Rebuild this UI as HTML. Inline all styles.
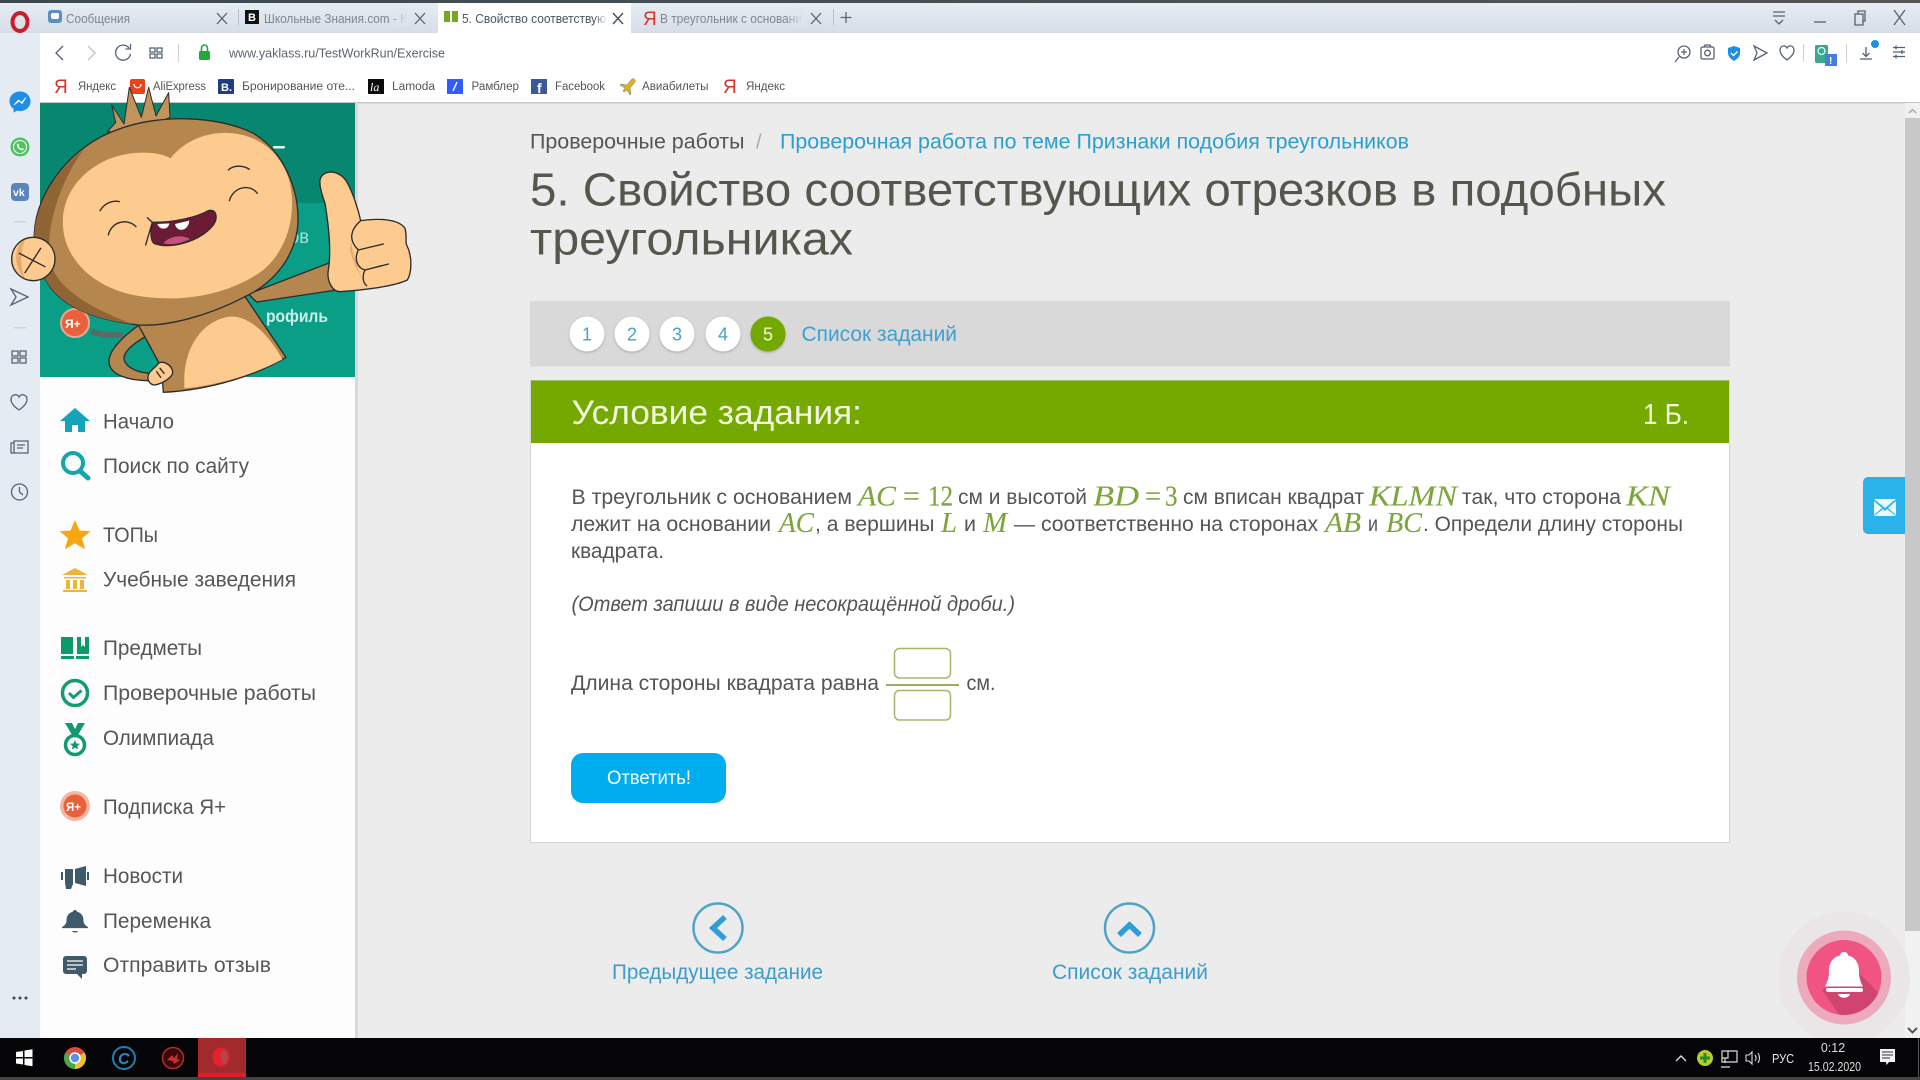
<!DOCTYPE html>
<html lang="ru"><head><meta charset="utf-8"><title>5. Свойство соответствующих отрезков</title>
<style>
html,body{margin:0;padding:0;width:1920px;height:1080px;overflow:hidden;background:#ececec}
svg{display:block}
text{font-family:"Liberation Sans","DejaVu Sans",sans-serif;white-space:pre}
.m{font-family:"Liberation Serif","DejaVu Serif",serif;font-style:italic;fill:#7ca53c;stroke:#7ca53c;stroke-width:.12;font-size:28px}
.mr{font-family:"Liberation Serif","DejaVu Serif",serif;fill:#7ca53c;stroke:#7ca53c;stroke-width:.2;font-size:28px}
.b{fill:#555;font-size:21px}
.nav{fill:#565656;font-size:21.5px}
.tab{fill:#7b8794;font-size:12.5px}
.bm{fill:#555;font-size:11.5px}
.ic{fill:none;stroke:#566273;stroke-width:1.3}
.ol{stroke:#2b2b2b;stroke-width:4;stroke-linejoin:round;stroke-linecap:round}
</style></head><body>
<svg width="1920" height="1080" viewBox="0 0 1920 1080" xmlns="http://www.w3.org/2000/svg">
<defs>
<linearGradient id="tb" x1="0" y1="0" x2="0" y2="1"><stop offset="0" stop-color="#e8eef5"/><stop offset="1" stop-color="#d6dde6"/></linearGradient>
<linearGradient id="top" x1="0" y1="0" x2="1" y2="0"><stop offset="0" stop-color="#3c4a50"/><stop offset="1" stop-color="#555"/></linearGradient>
<linearGradient id="fade" x1="0" y1="0" x2="1" y2="0"><stop offset="0" stop-color="#dee5ed" stop-opacity="0"/><stop offset="1" stop-color="#dee5ed"/></linearGradient>
<linearGradient id="fadew" x1="0" y1="0" x2="1" y2="0"><stop offset="0" stop-color="#fff" stop-opacity="0"/><stop offset="1" stop-color="#fff"/></linearGradient>
<filter id="sh" x="-30%" y="-30%" width="160%" height="160%"><feDropShadow dx="0" dy="1" stdDeviation="1.2" flood-color="#000" flood-opacity=".25"/></filter>
<clipPath id="bellc"><circle cx="1844" cy="977.5" r="37.5"/></clipPath>
</defs>

<!-- page bg -->
<rect width="1920" height="1080" fill="#ececec"/>

<!-- browser chrome -->
<rect width="1920" height="33" fill="url(#tb)"/>
<rect width="1920" height="3" fill="url(#top)"/>
<rect x="40" y="33" width="1880" height="70" fill="#fff"/>
<rect x="40" y="102" width="1880" height="1.5" fill="#c9c9c9"/>
<rect x="0" y="33" width="40" height="1005" fill="#e4ebf3"/>

<!-- Opera logo -->
<ellipse cx="20" cy="22" rx="7.5" ry="9" fill="none" stroke="#cc1b2c" stroke-width="4"/>

<!-- tabs -->
<rect x="438" y="3" width="193" height="31" fill="#fff"/>
<rect x="48" y="10" width="14" height="13" rx="3" fill="#5b8ec4"/><rect x="51" y="13" width="8" height="6" rx="2" fill="#fff"/>
<text class="tab" x="66" y="23" textLength="64" lengthAdjust="spacingAndGlyphs">Сообщения</text>
<path class="ic" d="M217 13l10 11M227 13l-10 11"/>
<rect x="238" y="9" width="1" height="16" fill="#b8c1cc"/>
<rect x="245" y="10" width="14" height="14" fill="#111"/><text x="248" y="21" font-size="11" font-weight="700" fill="#fff">В</text>
<text class="tab" x="264" y="23" textLength="143" lengthAdjust="spacingAndGlyphs">Школьные Знания.com - К</text>
<rect x="390" y="8" width="18" height="18" fill="url(#fade)"/>
<path class="ic" d="M415 13l10 11M425 13l-10 11"/>
<rect x="444" y="11" width="6" height="11" fill="#75a81e"/><rect x="452" y="11" width="6" height="11" fill="#75a81e"/>
<text x="462" y="23" font-size="12.5" fill="#4a5560" textLength="144" lengthAdjust="spacingAndGlyphs">5. Свойство соответствую</text>
<rect x="594" y="8" width="14" height="18" fill="url(#fadew)"/>
<path d="M613 13l10 11M623 13l-10 11" fill="none" stroke="#44505c" stroke-width="1.4"/>
<text x="643" y="25" font-size="19" fill="#d9332b">Я</text>
<text class="tab" x="660" y="23" textLength="142" lengthAdjust="spacingAndGlyphs">В треугольник с основани</text>
<rect x="786" y="8" width="17" height="18" fill="url(#fade)"/>
<path class="ic" d="M811 13l10 11M821 13l-10 11"/>
<rect x="833" y="9" width="1" height="16" fill="#b8c1cc"/>
<path d="M846 12v11M840.5 17.5h11" fill="none" stroke="#5a6572" stroke-width="1.3"/>
<!-- window controls -->
<path class="ic" d="M1773 12h12M1773 16h12M1775 20l4 4 4-4"/>
<path class="ic" d="M1814 22h12"/>
<path class="ic" d="M1855 14h8v11h-8zM1858 14v-3h7v10h-2"/>
<path class="ic" d="M1894 10l11 15M1905 10l-11 15"/>

<!-- address bar -->
<path class="ic" stroke-width="1.5" d="M63 46l-7 7 7 7"/>
<path d="M88 46l7 7-7 7" fill="none" stroke="#c2c7cc" stroke-width="1.5"/>
<path class="ic" d="M129 48a7.5 7.5 0 1 0 1.5 6M130.5 44v5h-5"/>
<path class="ic" d="M150 48h5v4h-5zM157 48h5v4h-5zM150 54h5v4h-5zM157 54h5v4h-5z"/>
<rect x="178" y="44" width="1" height="18" fill="#ccd2d8"/>
<rect x="199" y="51" width="11" height="9" rx="1.5" fill="#25a83a"/><path d="M201.5 51v-3a3 3 0 0 1 6 0v3" fill="none" stroke="#25a83a" stroke-width="1.6"/>
<text x="229" y="57.5" font-size="12.5" fill="#5a6570" textLength="216" lengthAdjust="spacingAndGlyphs">www.yaklass.ru/TestWorkRun/Exercise</text>
<!-- right toolbar -->
<circle cx="1684" cy="52" r="6" class="ic"/><path class="ic" d="M1679 57l-4 5M1684 49v6M1681 52h6"/>
<rect x="1701" y="47" width="13" height="12" rx="1.5" class="ic"/><circle cx="1707.5" cy="53" r="2.8" class="ic"/><path class="ic" d="M1704 47l1-2h5l1 2"/>
<path d="M1734 46l6 2v5c0 4-3 6-6 8-3-2-6-4-6-8v-5z" fill="#1d8fe0"/><path d="M1731 53l2.5 2.5 4-4" fill="none" stroke="#fff" stroke-width="1.4"/>
<path class="ic" d="M1754 46l13 7-13 7 3-7z"/>
<path class="ic" d="M1787 60c-4-3-7-6-7-9.5 0-5 5-6 7-2.5 2-3.5 7-2.5 7 2.5 0 3.5-3 6.5-7 9.5z"/>
<rect x="1803" y="44" width="1" height="18" fill="#ccd2d8"/>
<rect x="1815" y="45" width="13" height="18" rx="1.5" fill="#3aa98d"/><circle cx="1821.5" cy="51" r="3.5" fill="none" stroke="#dff" stroke-width="1.2"/>
<rect x="1825" y="54" width="12" height="12" fill="#4a7ce0"/><text x="1829" y="64" font-size="10" font-weight="700" fill="#fff">!</text>
<rect x="1846" y="44" width="1" height="18" fill="#ccd2d8"/>
<path class="ic" d="M1866 47v9M1862.5 53l3.5 3.5 3.5-3.5M1860 59h12"/>
<circle cx="1875" cy="44" r="4" fill="#1d8fe0"/>
<path class="ic" d="M1893 47.5h12M1893 52h12M1893 56.5h12M1896 45.5v4M1902 50v4M1896 54.5v4"/>

<!-- bookmarks -->
<text x="54" y="93" font-size="19" fill="#d9332b">Я</text>
<text class="bm" x="78" y="90" textLength="38" lengthAdjust="spacingAndGlyphs">Яндекс</text>
<rect x="130" y="79" width="15" height="15" rx="2" fill="#e8431a"/><path d="M134 84c0 5 7 5 7 0" fill="none" stroke="#fff" stroke-width="1.3"/>
<text class="bm" x="153" y="90" textLength="53" lengthAdjust="spacingAndGlyphs">AliExpress</text>
<rect x="218" y="79" width="16" height="15" rx="1" fill="#1d3f80"/><text x="221" y="91" font-size="11" font-weight="700" fill="#fff">B.</text>
<text class="bm" x="242" y="90" textLength="113" lengthAdjust="spacingAndGlyphs">Бронирование оте...</text>
<rect x="368" y="79" width="16" height="15" fill="#0b0b0b"/><text x="370" y="91" font-size="12" font-style="italic" fill="#fff" style="font-family:'Liberation Serif',serif">la</text>
<text class="bm" x="392" y="90" textLength="43" lengthAdjust="spacingAndGlyphs">Lamoda</text>
<rect x="447" y="79" width="16" height="15" fill="#315efb"/><path d="M453 91l4-9" stroke="#fff" stroke-width="1.4"/>
<text class="bm" x="471.5" y="90" textLength="47.5" lengthAdjust="spacingAndGlyphs">Рамблер</text>
<rect x="531" y="79" width="16" height="15" fill="#3b5998"/><text x="537" y="93" font-size="14" font-weight="700" fill="#fff">f</text>
<text class="bm" x="555" y="90" textLength="50" lengthAdjust="spacingAndGlyphs">Facebook</text>
<path d="M632 79l-5 6-6-1-1 1 5 3-2 3 1 1 3-2 3 5 1-1-1-6 5-6c1-2-1-4-3-3z" fill="#d9b21e" stroke="#556" stroke-width=".4"/>
<text class="bm" x="642" y="90" textLength="66.5" lengthAdjust="spacingAndGlyphs">Авиабилеты</text>
<text x="723" y="93" font-size="19" fill="#d9332b">Я</text>
<text class="bm" x="746" y="90" textLength="39" lengthAdjust="spacingAndGlyphs">Яндекс</text>

<!-- Opera side panel icons -->
<path d="M20 91.5c6 0 10.5 4.3 10.5 9.8s-4.5 9.8-10.5 9.8l-3-.5-3.5 2v-3.7c-2.500-1.800-4-4.500-4-7.600 0-5.500 4.500-9.800 10.500-9.800z" fill="#1f8ee6"/><path d="M14 105l4.500-5 3 2.500 4.500-5-4 6-3-2.500z" fill="#fff" stroke="#fff" stroke-width=".8"/>
<circle cx="20" cy="147" r="9.5" fill="#4fc25f"/><circle cx="20" cy="147" r="6.5" fill="none" stroke="#fff" stroke-width="1"/><path d="M17 144c-1 2.500 2.500 6.500 6 6.500l1-1.500-2-1-1 .7c-1-.5-2-1.500-2.500-2.500l.8-.8-1-1.900z" fill="#fff"/>
<rect x="11" y="183" width="18" height="18" rx="4" fill="#5b86bd"/><text x="13" y="196" font-size="10.5" font-weight="700" fill="#fff">vk</text>
<rect x="14" y="221" width="12" height="1.5" fill="#ccd3da"/>
<path class="ic" stroke-width="1.5" d="M11 289l17 8-17 8 5-8z"/>
<rect x="14" y="327" width="12" height="1.5" fill="#ccd3da"/>
<path class="ic" d="M12 351h6v5h-6zM20 351h6v5h-6zM12 358h6v5h-6zM20 358h6v5h-6z"/>
<path class="ic" stroke-width="1.5" d="M19 410c-5-3.500-8-7-8-10.500 0-5 6-6.500 8-2.500 2-4 8-2.500 8 2.500 0 3.500-3 7-8 10.500z"/>
<path class="ic" d="M11 443h3v10h-3zM14 441h14v12H14zM17 445h8M17 448h6"/>
<circle cx="19.5" cy="492" r="8" class="ic" stroke-width="1.4"/><path class="ic" d="M19.5 487v5l3.5 3"/>
<circle cx="14" cy="998" r="1.5" fill="#445"/><circle cx="20" cy="998" r="1.5" fill="#445"/><circle cx="26" cy="998" r="1.5" fill="#445"/>

<!-- site sidebar -->
<rect x="355" y="103" width="3" height="935" fill="#d8d8d8"/>
<rect x="40" y="377" width="315" height="661" fill="#fdfdfd"/>
<rect x="40" y="103" width="315" height="100" fill="#07876f"/>
<rect x="40" y="203" width="315" height="174" fill="#0a9e87"/>
<rect x="273" y="146" width="12" height="2.5" rx="1" fill="#e8f5f2"/>
<text x="289" y="243" font-size="19" fill="#9fe2d4" textLength="20" lengthAdjust="spacingAndGlyphs">ов</text>
<text x="266" y="322" font-size="17.5" font-weight="700" fill="#cdeee6" textLength="62" lengthAdjust="spacingAndGlyphs">рофиль</text>
<circle cx="75" cy="323" r="14" fill="#e8603c" stroke="#f1a68f" stroke-width="2"/><text x="65" y="328" font-size="12" font-weight="700" fill="#fff">Я+</text>
<path d="M92 329c8 3 20 4 30 3l2 5c-10 1-24 1-34-3z" fill="#5a6a62"/>

<!-- monkey (drawn in 3x zoom coordinates) -->
<g transform="translate(0 90) scale(.33333)">
  <path fill="#c2935a" stroke="#2b2b2b" stroke-width="3" stroke-linejoin="round" d="M322 125 347 98 335 45 372 102 388 -8 424 82 446 -8 468 78 506 8 510 82 400 130z"/>
  <!-- right arm -->
  <path class="ol" fill="#b5874f" d="M745 612 990 518 1010 600 770 636z"/>
  <!-- left arm -->
  <path class="ol" fill="#b5874f" d="M418 705C380 730 330 775 327 810 325 850 370 870 445 872L460 850C420 850 375 835 372 805 372 780 410 755 440 738z"/>
  <!-- body -->
  <path class="ol" fill="#b5874f" d="M735 620 858 802C780 850 640 900 490 907L488 880 475 815 415 705z"/>
  <path fill="#fdcb90" d="M553 880C550 770 610 690 690 680 750 675 810 740 847 808 770 850 660 885 553 895z"/>
  <!-- small hand -->
  <path class="ol" fill="#fdcb90" d="M445 855C450 840 465 835 475 820 490 810 515 825 518 845 520 860 490 880 465 885 450 885 440 870 445 855z"/>
  <path class="ol" fill="none" stroke-width="3" d="M480 835 492 850M470 845 482 862"/>
  <!-- head -->
  <path class="ol" fill="#b5874f" d="M103 430C108 300 220 165 350 120 470 72 650 75 760 130 860 190 905 320 892 420 875 525 800 590 735 620 620 680 500 710 415 705 300 690 200 660 150 590 115 540 100 490 103 430z"/>
  <path fill="#8f6536" d="M103 430C108 340 170 240 250 180 190 260 135 400 150 510 165 590 260 650 400 703 300 690 200 660 150 590 115 540 100 490 103 430z"/>
  <path fill="#fdcb90" d="M512 205C470 180 370 180 300 220 220 265 180 340 190 420 200 510 280 590 400 615 530 640 680 620 790 540 860 480 890 380 870 280 850 200 790 140 700 130 620 122 550 155 512 205z"/>
  <!-- ear -->
  <circle class="ol" cx="100" cy="507" r="65" fill="#fdcb90"/>
  <path fill="#e8a868" d="M60 460C42 490 45 540 75 565 60 530 60 490 75 450z"/>
  <path class="ol" fill="none" stroke-width="5" d="M58 490 135 530M122 475 75 548"/>
  <!-- face -->
  <g fill="none" class="ol" stroke-width="3.5">
    <path d="M325 435C335 392 385 385 408 410"/>
    <path d="M300 362C315 338 340 330 358 335"/>
    <path d="M688 332C700 290 750 280 772 310"/>
    <path d="M685 240C700 225 730 225 748 238"/>
    <path d="M442 383 457 397 437 465"/>
  </g>
  <path class="ol" stroke-width="3" fill="#6c1b34" d="M457 397C520 398 590 382 625 362 650 355 655 385 640 405 600 455 510 480 462 460 450 450 452 420 457 397z"/>
  <path fill="#fff" d="M472 402 508 400C505 420 480 422 472 402zM525 402 568 392C565 425 530 428 525 402z"/>
  <path fill="#c4527f" d="M490 460C510 435 550 435 570 447 540 462 515 465 490 460z"/>
  <!-- thumbs up -->
  <path class="ol" fill="#fdcb90" d="M960 270C965 240 1015 235 1040 275 1060 310 1075 360 1082 392 1130 385 1195 385 1215 415 1222 440 1215 455 1220 465 1238 500 1235 550 1222 570 1180 590 1090 600 1020 605 995 605 980 570 985 540 995 480 985 400 975 340 965 310 958 290 960 270z"/>
  <path fill="#e8a868" d="M1055 430C1050 460 1060 500 1070 520 1075 550 1090 570 1100 585 1085 570 1060 520 1050 480z"/>
  <path class="ol" fill="none" d="M1082 392C1050 420 1045 450 1075 480 1060 510 1075 535 1095 540 1085 560 1090 580 1100 587M1075 480 1150 462M1095 540 1165 522"/>
</g>

<!-- sidebar nav -->
<path d="M60 421 75 408 90 421H85V432H78V425H72V432H65V421Z" fill="#14a3b8"/>
<circle cx="73" cy="463" r="10" fill="none" stroke="#14a5ad" stroke-width="4"/><path d="M80 471l8 7" stroke="#14a5ad" stroke-width="5" stroke-linecap="round"/>
<path d="M75 520l4.500 10.500 11 .8-8.500 7 3 11-10-6-10 6 3-11-8.500-7 11-.8z" fill="#f6a60f"/>
<path d="M75 568 88 575H62zM64 577h22v1.500H64zM66 580h4v9h-4zM73 580h4v9h-4zM80 580h4v9h-4zM63 590h24v2H63z" fill="#eeb43a"/>
<path d="M61 637H73V654H61zM77 637H81V647L83 645 85 647V637H89V654H77zM61 656H74V659H61zM76 656H89V659H76z" fill="#0c9a6a"/>
<circle cx="75" cy="693" r="12.5" fill="none" stroke="#159a74" stroke-width="3.5"/><path d="M69 693l4.500 4.500 8-7" fill="none" stroke="#159a74" stroke-width="3"/>
<path d="M65 723h7l3 6 3-6h7l-7 12h-6z" fill="#13996f"/><circle cx="75" cy="745" r="9.5" fill="none" stroke="#13996f" stroke-width="3.5"/><path d="M75 740l1.500 3.500 3.500.3-2.700 2.300.9 3.400-3.200-1.900-3.200 1.900.9-3.400-2.700-2.300 3.500-.3z" fill="#13996f"/>
<circle cx="75" cy="806" r="15" fill="#f2b6a4"/><circle cx="75" cy="806" r="11.5" fill="#e8603c"/><text x="66" y="811" font-size="11.5" font-weight="700" fill="#fff">Я+</text>
<path d="M61 872h2v8h-2zM65 869h8v15l-2 5h-5l-1-6zM75 869l11-3v20l-11-3zM87 872h2v8h-2z" fill="#3f5b6b"/>
<path d="M75 910c1.200 0 2 .8 2 1.600 5 1.500 6.500 5 6.500 9 0 3 1.500 4.500 4.500 6.500v1H62v-1c3-2 4.500-3.500 4.500-6.500 0-4 1.500-7.500 6.500-9 0-.8.800-1.600 2-1.600zM72 931h6c-.5 2-5.500 2-6 0z" fill="#3f5b6b"/>
<path d="M66 956h18a3 3 0 0 1 3 3v12a3 3 0 0 1-3 3h-2v5l-5-5H66a3 3 0 0 1-3-3v-12a3 3 0 0 1 3-3z" fill="#3f5b6b"/><path d="M67 961h16M67 965h16M67 969h9" stroke="#fff" stroke-width="1.3"/>

<text class="nav" x="103" y="428.5" textLength="71" lengthAdjust="spacingAndGlyphs">Начало</text>
<text class="nav" x="103" y="473" textLength="146" lengthAdjust="spacingAndGlyphs">Поиск по сайту</text>
<text class="nav" x="103" y="542" textLength="55" lengthAdjust="spacingAndGlyphs">ТОПы</text>
<text class="nav" x="103" y="586.5" textLength="193" lengthAdjust="spacingAndGlyphs">Учебные заведения</text>
<text class="nav" x="103" y="655" textLength="99" lengthAdjust="spacingAndGlyphs">Предметы</text>
<text class="nav" x="103" y="700" textLength="213" lengthAdjust="spacingAndGlyphs">Проверочные работы</text>
<text class="nav" x="103" y="745" textLength="111" lengthAdjust="spacingAndGlyphs">Олимпиада</text>
<text class="nav" x="103" y="814" textLength="123" lengthAdjust="spacingAndGlyphs">Подписка Я+</text>
<text class="nav" x="103" y="883" textLength="80" lengthAdjust="spacingAndGlyphs">Новости</text>
<text class="nav" x="103" y="928" textLength="108" lengthAdjust="spacingAndGlyphs">Переменка</text>
<text class="nav" x="103" y="972" textLength="168" lengthAdjust="spacingAndGlyphs">Отправить отзыв</text>

<!-- breadcrumb -->
<text x="530" y="148.5" font-size="21.5" fill="#555" textLength="214.5" lengthAdjust="spacingAndGlyphs">Проверочные работы</text>
<text x="756" y="148.5" font-size="20" fill="#aaa">/</text>
<text x="780" y="148.5" font-size="21.5" fill="#2a9fd0" textLength="629" lengthAdjust="spacingAndGlyphs">Проверочная работа по теме Признаки подобия треугольников</text>
<!-- h1 -->
<text x="530" y="205.5" font-size="46" fill="#56564c" textLength="1136" lengthAdjust="spacingAndGlyphs">5. Свойство соответствующих отрезков в подобных</text>
<text x="530" y="254.5" font-size="46" fill="#56564c" textLength="323" lengthAdjust="spacingAndGlyphs">треугольниках</text>

<!-- pager -->
<rect x="530" y="301" width="1200" height="65.5" fill="#d9d9d9"/>
<g filter="url(#sh)" fill="#fff"><circle cx="587" cy="334" r="17.5"/><circle cx="632" cy="334" r="17.5"/><circle cx="677" cy="334" r="17.5"/><circle cx="723" cy="334" r="17.5"/></g>
<circle cx="768" cy="334" r="17.5" fill="#72a800" filter="url(#sh)"/>
<g font-size="18" text-anchor="middle" fill="#4aa0c8"><text x="587" y="340.5">1</text><text x="632" y="340.5">2</text><text x="677" y="340.5">3</text><text x="723" y="340.5">4</text><text x="768" y="340.5" fill="#f3f8e4">5</text></g>
<text x="801.5" y="341" font-size="21.5" fill="#3f9fd2" textLength="155.5" lengthAdjust="spacingAndGlyphs">Список заданий</text>

<!-- card -->
<rect x="530.5" y="380.5" width="1199" height="462" fill="#fff" stroke="#d4d4d4"/>
<rect x="531" y="380.5" width="1198" height="62.5" fill="#76a900"/>
<text x="571.5" y="424" font-size="34" fill="#f2f8e0" textLength="290.5" lengthAdjust="spacingAndGlyphs">Условие задания:</text>
<text x="1643" y="424" font-size="29" fill="#f2f8e0" textLength="46" lengthAdjust="spacingAndGlyphs">1 Б.</text>

<!-- problem text -->
<text class="b" x="571.5" y="504" textLength="280.5" lengthAdjust="spacingAndGlyphs">В треугольник с основанием</text>
<text class="m" x="858" y="505.5" textLength="38" lengthAdjust="spacingAndGlyphs">AC</text><text class="mr" x="903" y="505.5" textLength="17" lengthAdjust="spacingAndGlyphs">=</text><text class="mr" x="928" y="505.5" textLength="25" lengthAdjust="spacingAndGlyphs">12</text>
<text class="b" x="958" y="504" textLength="129" lengthAdjust="spacingAndGlyphs">см и высотой</text>
<text class="m" x="1093" y="505.5" textLength="46" lengthAdjust="spacingAndGlyphs">BD</text><text class="mr" x="1145" y="505.5" textLength="16" lengthAdjust="spacingAndGlyphs">=</text><text class="mr" x="1165" y="505.5" textLength="12.5" lengthAdjust="spacingAndGlyphs">3</text>
<text class="b" x="1183" y="504" textLength="181" lengthAdjust="spacingAndGlyphs">см вписан квадрат</text>
<text class="m" x="1369" y="505.5" textLength="88" lengthAdjust="spacingAndGlyphs">KLMN</text>
<text class="b" x="1462" y="504" textLength="159" lengthAdjust="spacingAndGlyphs">так, что сторона</text>
<text class="m" x="1626" y="505.5" textLength="44" lengthAdjust="spacingAndGlyphs">KN</text>

<text class="b" x="571" y="531" textLength="200" lengthAdjust="spacingAndGlyphs">лежит на основании</text>
<text class="m" x="779" y="532" textLength="35" lengthAdjust="spacingAndGlyphs">AC</text>
<text class="b" x="815" y="531" textLength="119.5" lengthAdjust="spacingAndGlyphs">, а вершины</text>
<text class="m" x="941" y="532" textLength="16" lengthAdjust="spacingAndGlyphs">L</text>
<text class="b" x="964" y="531" textLength="12" lengthAdjust="spacingAndGlyphs">и</text>
<text class="m" x="983" y="532" textLength="24" lengthAdjust="spacingAndGlyphs">M</text>
<text class="b" x="1014" y="531" textLength="304" lengthAdjust="spacingAndGlyphs">— соответственно на сторонах</text>
<text class="m" x="1325" y="532" textLength="36" lengthAdjust="spacingAndGlyphs">AB</text>
<text class="b" x="1368" y="531" textLength="10" lengthAdjust="spacingAndGlyphs">и</text>
<text class="m" x="1386" y="532" textLength="36" lengthAdjust="spacingAndGlyphs">BC</text>
<text class="b" x="1423" y="531" textLength="260" lengthAdjust="spacingAndGlyphs">. Определи длину стороны</text>
<text class="b" x="571" y="558" textLength="93" lengthAdjust="spacingAndGlyphs">квадрата.</text>
<text class="b" x="571.5" y="611" font-style="italic" textLength="443.5" lengthAdjust="spacingAndGlyphs">(Ответ запиши в виде несокращённой дроби.)</text>

<text class="b" x="571" y="690" textLength="308" lengthAdjust="spacingAndGlyphs">Длина стороны квадрата равна</text>
<rect x="894.5" y="648.5" width="56" height="29.5" rx="5" fill="#fff" stroke="#a8b56e" stroke-width="1.5"/>
<rect x="886" y="684" width="73" height="2" fill="#9cab5c"/>
<rect x="894.5" y="690.5" width="56" height="29.5" rx="5" fill="#fff" stroke="#a8b56e" stroke-width="1.5"/>
<text class="b" x="966.5" y="690" textLength="29" lengthAdjust="spacingAndGlyphs">см.</text>

<rect x="571" y="753" width="155" height="50" rx="12" fill="#00adef"/>
<text x="607" y="784" font-size="19" fill="#fff" textLength="84" lengthAdjust="spacingAndGlyphs">Ответить!</text>

<!-- bottom nav -->
<circle cx="718" cy="928" r="24.5" fill="none" stroke="#4fa3c6" stroke-width="2.5"/>
<path d="M725 917l-12 11 12 11" fill="none" stroke="#2f9ed6" stroke-width="5.5"/>
<circle cx="1129.5" cy="928" r="24.5" fill="none" stroke="#4fa3c6" stroke-width="2.5"/>
<path d="M1119 935l10.5-10 10.5 10" fill="none" stroke="#2f9ed6" stroke-width="5.5"/>
<text x="612" y="979" font-size="21.5" fill="#3f9cc8" textLength="211" lengthAdjust="spacingAndGlyphs">Предыдущее задание</text>
<text x="1052" y="979" font-size="21.5" fill="#3f9cc8" textLength="156" lengthAdjust="spacingAndGlyphs">Список заданий</text>

<!-- scrollbar -->
<rect x="1905" y="103" width="15" height="935" fill="#f1f1f1"/>
<rect x="1905" y="118" width="15" height="813" fill="#c8c8c8"/>
<path d="M1909 113l3.500-3.500 3.500 3.500" fill="none" stroke="#aaa" stroke-width="1.5"/>
<path d="M1908 1028l4.500 4.500 4.500-4.500" fill="none" stroke="#555" stroke-width="2"/>

<!-- mail tab -->
<path d="M1905 478h-37a5 5 0 0 0-5 5v46a5 5 0 0 0 5 5h37z" fill="#7d8f99"/>
<path d="M1905 477h-37a5 5 0 0 0-5 5v46a5 5 0 0 0 5 5h37z" fill="#29b3ea"/>
<path d="M1874 499h22l-11 9zM1874 501v14l8-7zM1896 501v14l-8-7zM1874 516l9-7 2 2 2-2 9 7z" fill="#eafaff"/>

<!-- bell widget -->
<circle cx="1844" cy="977.5" r="66" fill="#eae6e7"/>
<circle cx="1844" cy="977.5" r="47" fill="#edaabd"/>
<circle cx="1844" cy="977.5" r="37.5" fill="#ef5482"/>
<path clip-path="url(#bellc)" d="M1858 972 1895 1010 1850 1030 1822 990z" fill="#c9436d" opacity=".85"/>
<path d="M1844 952c2.500 0 4 1.500 4 3.500 8 2 11 8 11 16 0 7 2 11 4 15h-38c2-4 4-8 4-15 0-8 3-14 11-16 0-2 1.500-3.500 4-3.500z" fill="#fff"/>
<rect x="1826" y="988" width="37" height="4" rx="2" fill="#fff"/>
<path d="M1838 994h12c-1 5-11 5-12 0z" fill="#fff"/>

<!-- taskbar -->
<rect y="1038" width="1920" height="39" fill="#050508"/>
<rect y="1077" width="1920" height="3" fill="#444"/>
<path d="M16 1052l7-1v6h-7zM24.500 1050.500l8-1.300v7.800h-8zM16 1058.500h7v6l-7-1zM24.500 1058.500h8v7.800l-8-1.300z" fill="#fff"/>
<circle cx="75" cy="1058" r="11" fill="#dd4b3e"/><path d="M75 1058 65.500 1052.500A11 11 0 0 0 75 1069z" fill="#4aa64a"/><path d="M75 1058 84.500 1052.500A11 11 0 0 1 75 1069z" fill="#f3c125"/><circle cx="75" cy="1058" r="5" fill="#5a94e8" stroke="#fff" stroke-width="1.5"/>
<circle cx="124" cy="1058" r="11" fill="none" stroke="#1f7fb5" stroke-width="2"/><text x="118" y="1064" font-size="16" font-weight="700" font-style="italic" fill="#2a8cc4">C</text>
<circle cx="173" cy="1058" r="10.5" fill="#3a0808" stroke="#b52a2a" stroke-width="1.5"/><path d="M167 1060l5-5 2 3 4-5-1 6 3 1-6 4-1-3z" fill="#c83030"/>
<rect x="198" y="1038" width="48" height="39" fill="#a32a2c"/>
<rect x="198" y="1073" width="48" height="4" fill="#e61b25"/>
<ellipse cx="221" cy="1057" rx="8.500" ry="9.500" fill="#e8202c"/><ellipse cx="224" cy="1057" rx="3.500" ry="7" fill="#b0484a"/>
<path d="M1676 1061l5-5 5 5" fill="none" stroke="#ddd" stroke-width="1.4"/>
<circle cx="1705" cy="1058" r="8" fill="#c3c92a"/><path d="M1705 1053v10M1700 1058h10" stroke="#1c8f2e" stroke-width="3"/>
<path d="M1722 1051h15v11h-15zM1722 1051h6v7h-6zM1725 1058v5M1721 1067h9" fill="none" stroke="#ddd" stroke-width="1.2"/>
<path d="M1746 1055h3l3-3v12l-3-3h-3zM1755 1055c1.500 2 1.500 4 0 6M1758 1053c2 3 2 7 0 10" fill="none" stroke="#ddd" stroke-width="1.1"/>
<text x="1772" y="1063" font-size="12.5" fill="#e8e8e8" textLength="22" lengthAdjust="spacingAndGlyphs">РУС</text>
<text x="1833" y="1052" font-size="12.5" fill="#ddd" text-anchor="middle">0:12</text>
<text x="1808" y="1071" font-size="12.5" fill="#ddd" textLength="53" lengthAdjust="spacingAndGlyphs">15.02.2020</text>
<path d="M1880 1049h15v13h-6l-2.500 3-.5-3h-6z" fill="#f2f2f2"/><path d="M1882 1052h11M1882 1055h11M1882 1058h8" stroke="#333" stroke-width="1"/>
<rect x="1918" y="1038" width="1" height="39" fill="#555"/>
</svg>
</body></html>
